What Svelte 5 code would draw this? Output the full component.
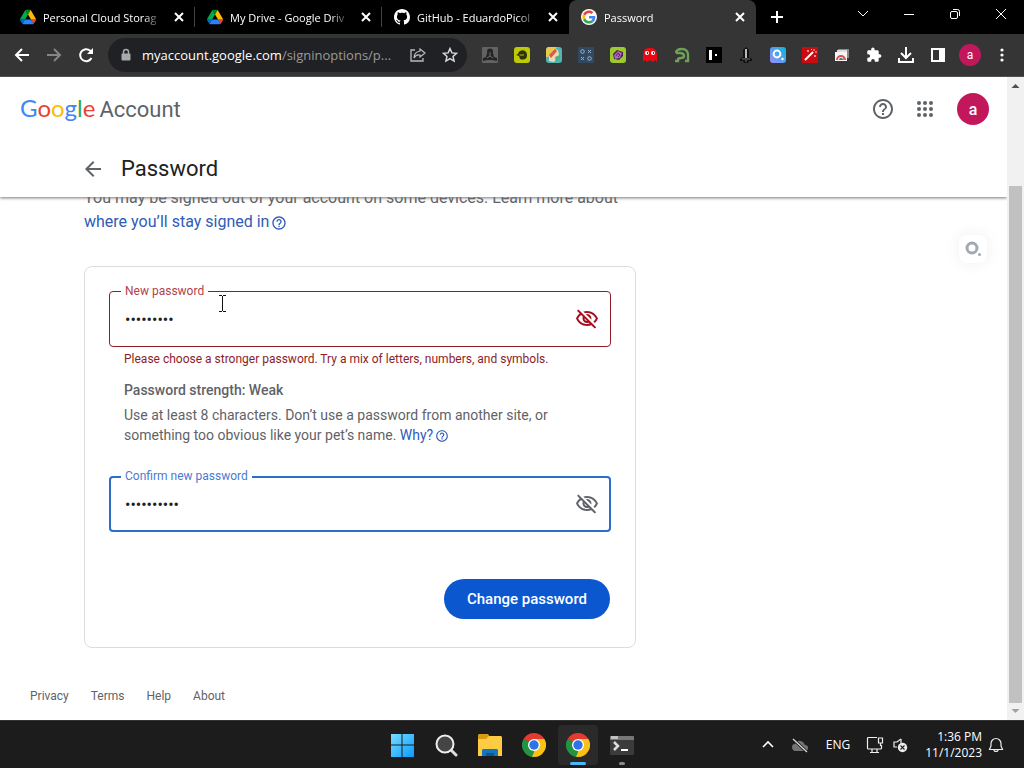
<script lang="ts">
    const tabs = [
        { title: "Personal Cloud Storag", icon: "drive", active: false },
        { title: "My Drive - Google Driv", icon: "drive", active: false },
        { title: "GitHub - EduardoPicol", icon: "github", active: false },
        { title: "Password", icon: "google", active: true },
    ]

    const extensions = [
        "figure",
        "helmet",
        "photo",
        "oxxo",
        "gem",
        "ghost",
        "snake",
        "bar",
        "sword",
        "search",
        "wand",
        "cards",
        "puzzle",
        "download",
        "panel",
    ]

    const footerLinks = ["Privacy", "Terms", "Help", "About"]

    let newPassword = $state("aaaaaaaaa")
    let confirmPassword = $state("aaaaaaaaaa")
</script>

{#snippet help()}
    <svg viewBox="0 0 24 24" fill="currentColor" aria-hidden="true">
        <path
            d="M11 18h2v-2h-2v2zm1-16C6.48 2 2 6.48 2 12s4.48 10 10 10 10-4.48 10-10S17.52 2 12 2zm0 18c-4.41 0-8-3.59-8-8s3.59-8 8-8 8 3.59 8 8-3.59 8-8 8zm0-14c-2.21 0-4 1.79-4 4h2c0-1.1.9-2 2-2s2 .9 2 2c0 2-3 1.75-3 5h2c0-2.25 3-2.5 3-5 0-2.21-1.79-4-4-4z"
        />
    </svg>
{/snippet}

{#snippet eyeOff()}
    <svg viewBox="0 0 24 24" width="24" height="24" fill="currentColor" aria-hidden="true">
        <path
            d="M12 6c3.79 0 7.17 2.13 8.82 5.5-.59 1.22-1.42 2.27-2.41 3.12l1.41 1.41c1.39-1.23 2.49-2.77 3.18-4.53C21.27 7.11 17 4 12 4c-1.27 0-2.49.2-3.64.57l1.65 1.65C10.66 6.09 11.32 6 12 6zm-1.07 1.14L13 9.21c.57.25 1.03.71 1.28 1.28l2.07 2.07c.08-.34.14-.7.14-1.07C16.5 9.01 14.48 7 12 7c-.37 0-.72.05-1.07.14zM2.01 3.87l2.68 2.68C3.06 7.83 1.77 9.53 1 11.5 2.73 15.89 7 19 12 19c1.52 0 2.98-.29 4.32-.82l3.42 3.42 1.41-1.41L3.42 2.45 2.01 3.87zm7.5 7.5l2.61 2.61c-.04.01-.08.02-.12.02-1.38 0-2.5-1.12-2.5-2.5 0-.05.01-.08.01-.13zm-3.4-3.4l1.75 1.75c-.23.55-.36 1.15-.36 1.78 0 2.48 2.02 4.5 4.5 4.5.63 0 1.23-.13 1.77-.36l.98.98c-.88.24-1.8.38-2.75.38-3.79 0-7.17-2.13-8.82-5.5.7-1.43 1.72-2.61 2.93-3.53z"
        />
    </svg>
{/snippet}

{#snippet chromeLogo()}
    <svg viewBox="0 0 24 24" width="24" height="24" aria-hidden="true">
        <path d="M12 12L1.600 6A12 12 0 0 1 22.400 6z" fill="#e33b2e" />
        <path d="M12 12L22.400 6A12 12 0 0 1 12 24z" fill="#fbc116" />
        <path d="M12 12L12 24A12 12 0 0 1 1.600 6z" fill="#229342" />
        <path d="M12 6H22.400L17.200 15L12 24L17.200 15z" fill="#fbc116" />
        <path d="M1.600 6L6.800 15L12 12z" fill="#229342" />
        <path d="M17.200 15L12 24L10 23.800L14 15z" fill="#fbc116" />
        <circle cx="12" cy="12" r="6" fill="#fff" />
        <circle cx="12" cy="12" r="4.700" fill="#2f73e8" />
    </svg>
{/snippet}

{#snippet favicon(name: string)}
    {#if name === "drive"}
        <svg viewBox="0 0 87 78" width="16" height="16" aria-hidden="true">
            <path
                d="m6.600 66.850 3.850 6.650c.8 1.400 1.950 2.500 3.300 3.300l13.750-23.800h-27.500c0 1.550.4 3.100 1.200 4.500z"
                fill="#0066da"
            />
            <path
                d="m43.650 25-13.750-23.800c-1.350.8-2.500 1.900-3.300 3.300l-25.400 44a9.060 9.060 0 0 0-1.200 4.500h27.500z"
                fill="#00ac47"
            />
            <path
                d="m73.550 76.800c1.350-.8 2.500-1.900 3.300-3.300l1.600-2.750 7.650-13.250c.8-1.400 1.200-2.950 1.200-4.500h-27.500l5.850 11.500z"
                fill="#ea4335"
            />
            <path
                d="m43.650 25 13.750-23.800c-1.350-.8-2.900-1.200-4.500-1.200h-18.500c-1.600 0-3.150.45-4.500 1.200z"
                fill="#00832d"
            />
            <path
                d="m59.800 53h-32.300l-13.750 23.800c1.350.8 2.900 1.200 4.500 1.200h50.800c1.600 0 3.150-.45 4.500-1.200z"
                fill="#2684fc"
            />
            <path
                d="m73.400 26.500-12.700-22c-.8-1.400-1.950-2.500-3.300-3.300l-13.750 23.800 16.150 28h27.450c0-1.550-.4-3.100-1.200-4.500z"
                fill="#ffba00"
            />
        </svg>
    {:else if name === "github"}
        <svg viewBox="0 0 16 16" width="16" height="16" fill="#fff" aria-hidden="true">
            <path
                d="M8 0C3.580 0 0 3.580 0 8c0 3.540 2.290 6.530 5.470 7.590.4.070.55-.17.55-.38 0-.19-.01-.82-.01-1.490-2.010.37-2.530-.49-2.690-.94-.09-.23-.48-.94-.82-1.130-.28-.15-.68-.52-.01-.53.63-.01 1.080.58 1.230.82.72 1.210 1.870.87 2.330.66.07-.52.28-.87.51-1.070-1.780-.2-3.640-.89-3.640-3.950 0-.87.31-1.590.82-2.150-.08-.2-.36-1.020.08-2.120 0 0 .67-.21 2.200.82.64-.18 1.320-.27 2-.27s1.360.09 2 .27c1.530-1.040 2.200-.82 2.200-.82.44 1.100.16 1.920.08 2.120.51.56.82 1.270.82 2.150 0 3.070-1.870 3.750-3.650 3.950.29.25.54.73.54 1.480 0 1.070-.01 1.930-.01 2.200 0 .21.15.46.55.38A8.010 8.010 0 0 0 16 8c0-4.420-3.580-8-8-8z"
            />
        </svg>
    {:else}
        <svg viewBox="-5 -5 58 58" width="16" height="16" aria-hidden="true">
            <circle cx="24" cy="24" r="29" fill="#fff" />
            <path
                d="M24 9.500c3.540 0 6.710 1.220 9.210 3.600l6.850-6.850C35.900 2.380 30.470 0 24 0 14.620 0 6.510 5.380 2.560 13.220l7.980 6.190C12.430 13.720 17.740 9.500 24 9.500z"
                fill="#ea4335"
            />
            <path
                d="M46.980 24.550c0-1.570-.15-3.090-.38-4.550H24v9.020h12.940c-.58 2.960-2.260 5.480-4.780 7.180l7.730 6c4.510-4.180 7.090-10.360 7.090-17.650z"
                fill="#4285f4"
            />
            <path
                d="M10.530 28.590A14.500 14.500 0 0 1 9.770 24c0-1.600.27-3.140.76-4.590l-7.980-6.190A23.900 23.900 0 0 0 0 24c0 3.880.92 7.540 2.560 10.780z"
                fill="#fbbc05"
            />
            <path
                d="M24 48c6.480 0 11.930-2.130 15.890-5.810l-7.730-6c-2.150 1.450-4.920 2.300-8.160 2.300-6.260 0-11.570-4.220-13.470-9.910l-7.980 6.190C6.510 42.620 14.620 48 24 48z"
                fill="#34a853"
            />
        </svg>
    {/if}
{/snippet}

{#snippet extensionIcon(name: string)}
    <svg viewBox="0 0 16 16" width="16" height="16" aria-hidden="true">
        {#if name === "figure"}
            <rect width="16" height="16" rx="1" fill="#626262" />
            <circle cx="8" cy="4.500" r="3" fill="#242424" />
            <path d="M5 6h6l1 4 3 1v3l-4-1H5l-4 1v-3l3-1z" fill="#242424" />
            <path d="M5 11l3-2 3 2M8 5v4" stroke="#888" stroke-width=".7" fill="none" />
        {:else if name === "helmet"}
            <rect width="16" height="16" rx="3" fill="#bdca05" />
            <path d="M4 7c1-5 9-5 9 1 0 5-4 5-7 4L5 9 2 8z" fill="#30330c" />
            <path d="M5 7h5v2H6z" fill="#727a08" />
        {:else if name === "photo"}
            <rect width="16" height="16" rx="3" fill="#53b4b4" />
            <path d="M2 0h9L2 10H0V3q0-2 2-3z" fill="#edc64f" />
            <path d="M3 9L9 2l3 1 1 5-5 7-5-1z" fill="#edd9b6" />
            <path d="M3 8l6-6 2 2-6 7z" fill="#db5b3e" />
            <path d="M9 10l5-2v4l-4 3z" fill="#45b38c" />
        {:else if name === "oxxo"}
            <rect width="16" height="16" fill="#304961" />
            <g fill="none" stroke="#9db2c8">
                <circle cx="4.500" cy="4.500" r="1.800" />
                <circle cx="11.500" cy="11.500" r="1.800" />
                <path d="M10 3l3 3m0-3l-3 3M3 10l3 3m0-3l-3 3" />
            </g>
        {:else if name === "gem"}
            <rect width="16" height="16" rx="3" fill="#9ecb2c" />
            <path d="M3 7l4-4 6 2v4l-4 4-5-1z" fill="#462251" />
            <path d="M4 8l4-4 4 2-2 5-5 1z" fill="#ad65bc" />
            <path d="M6 9l2-3 2 2-2 2" fill="none" stroke="#573064" />
        {:else if name === "ghost"}
            <path d="M1 15V8Q1 2 6 1h4q5 1 5 7v7l-2-2-2 2-3-2-3 2-2-2z" fill="#ed0710" />
            <circle cx="5" cy="6" r="2" fill="#fff" />
            <circle cx="11" cy="6" r="2" fill="#fff" />
            <path d="M5 5h1v2H5zm6 0h1v2h-1z" fill="#222bdc" />
        {:else if name === "snake"}
            <path
                d="M2 6q0-4 6-4 6 0 6 6v6h-3M2 6h4q4 0 4 3 0 2-3 2-2 0-3 1v2H1"
                fill="none"
                stroke="#6f9f59"
                stroke-width="2.400"
            />
        {:else if name === "bar"}
            <rect width="16" height="16" fill="#000" />
            <path d="M3 3h3v10H3zm6 4h2v2H9z" fill="#fff" />
        {:else if name === "sword"}
            <path d="M5 3l3-3 3 3v7l3 2v2h-3l-1 2H6l-1-2H2v-2l3-2z" fill="#111" />
            <path d="M8 2v9" stroke="#b8b8b8" stroke-width="2" />
            <path d="M4 12h8M8 13v2" stroke="#79716b" />
        {:else if name === "search"}
            <defs>
                <linearGradient id="search-fill" x1="0" y1="1" x2="1" y2="0">
                    <stop stop-color="#a08cff" />
                    <stop offset="1" stop-color="#05b6dd" />
                </linearGradient>
            </defs>
            <rect width="16" height="16" rx="3" fill="url(#search-fill)" />
            <circle cx="7" cy="7" r="3.400" fill="none" stroke="#fff" stroke-width="2" />
            <circle cx="12.500" cy="12" r="1.200" fill="#fff" />
        {:else if name === "wand"}
            <rect width="16" height="16" fill="#c80c12" />
            <path d="M3 13l8-8" stroke="#fff" stroke-width="2" />
            <path d="M6 3v2m-1-1h2m5-2v2m1 4v2m-1-1h2M9 2l1 1m3 2h2" stroke="#ffb8aa" />
        {:else if name === "cards"}
            <path d="M4 2h11v9h-2v3H1V5h3z" fill="#888" />
            <rect x="3" y="3" width="10" height="8" fill="#dedede" />
            <rect x="1" y="5" width="12" height="9" fill="#f5f5f5" />
            <path d="M3 13a4 4 0 0 1 8 0" fill="none" stroke="#e24b42" stroke-width="2" />
            <path d="M5 13a2 2 0 0 1 4 0z" fill="#3b6eab" />
            <path d="M9 10l2 3H9z" fill="#75a85e" />
        {:else if name === "puzzle"}
            <path
                d="M13.700 7.300h-1V4.700c0-.8-.6-1.400-1.400-1.400H8.600v-1a1.700 1.700 0 0 0-3.400 0v1H2.600c-.8 0-1.300.6-1.300 1.400v2.500h1a1.800 1.800 0 0 1 0 3.600h-1v2.600c0 .7.600 1.300 1.300 1.300h2.600v-1a1.800 1.800 0 0 1 3.600 0v1h2.500c.8 0 1.400-.6 1.400-1.300v-2.700h1a1.700 1.700 0 0 0 0-3.400z"
                fill="#fff"
            />
        {:else if name === "download"}
            <path d="M8 0v10M3 6l5 5 5-5M1 11v4h14v-4" fill="none" stroke="#fff" stroke-width="2" />
        {:else}
            <path d="M1 1h14v14H1zM3 3v10h6V3z" fill="#fff" fill-rule="evenodd" />
        {/if}
    </svg>
{/snippet}

<div class="desktop">
    <div class="tab-strip">
        {#each tabs as tab}
            <div class="tab" class:active={tab.active}>
                {@render favicon(tab.icon)}
                <span class="tab-title">{tab.title}</span>
                <button class="tab-close" aria-label="Close tab">
                    <svg viewBox="0 0 16 16" width="16" height="16" aria-hidden="true">
                        <path d="M4 4l8 8m0-8l-8 8" stroke="#fff" stroke-width="2" />
                    </svg>
                </button>
            </div>
        {/each}
        <button class="new-tab" aria-label="New tab">
            <svg viewBox="0 0 16 16" width="16" height="16" aria-hidden="true">
                <path d="M8 2v12M2 8h12" stroke="#fff" stroke-width="2" />
            </svg>
        </button>
        <div class="window-controls">
            <button aria-label="Search tabs">
                <svg viewBox="0 0 12 12" width="12" height="12"><path d="M1 3l5 5 5-5" /></svg>
            </button>
            <button aria-label="Minimize">
                <svg viewBox="0 0 12 12" width="12" height="12"><path d="M1 6.500h10" /></svg>
            </button>
            <button aria-label="Restore">
                <svg viewBox="0 0 12 12" width="12" height="12">
                    <rect x="1.500" y="3.500" width="7" height="7" rx="1.500" />
                    <path d="M4 1.500h4.500q2 0 2 2V8" />
                </svg>
            </button>
            <button aria-label="Close window">
                <svg viewBox="0 0 12 12" width="12" height="12"><path d="M1 1l10 10M11 1L1 11" /></svg>
            </button>
        </div>
    </div>

    <div class="toolbar">
        <button class="tool" aria-label="Back">
            <svg viewBox="0 0 16 16" width="16" height="16">
                <path d="M15 8H2m6-6L2 8l6 6" fill="none" stroke="#fff" stroke-width="2" />
            </svg>
        </button>
        <button class="tool" aria-label="Forward">
            <svg viewBox="0 0 16 16" width="16" height="16">
                <path d="M1 8h13M8 2l6 6-6 6" fill="none" stroke="#858585" stroke-width="2" />
            </svg>
        </button>
        <button class="tool" aria-label="Reload">
            <svg viewBox="0 0 16 16" width="16" height="16">
                <path d="M13.500 11A6 6 0 1 1 12 3.500l2 2" fill="none" stroke="#fff" stroke-width="2" />
                <path d="M15 1v6H9z" fill="#fff" />
            </svg>
        </button>
        <div class="omnibox">
            <svg class="lock" viewBox="0 0 12 14" width="12" height="14" aria-hidden="true">
                <path d="M3.500 6V4a2.500 2.500 0 0 1 5 0v2" fill="none" stroke="#aaa" stroke-width="1.500" />
                <rect x="1.500" y="5.500" width="9" height="7" rx="1" fill="#aaa" />
            </svg>
            <span class="url">myaccount.google.com<span>/signinoptions/p...</span></span>
            <button class="tool" aria-label="Share this page">
                <svg viewBox="0 0 16 16" width="16" height="16" fill="none" stroke="#bbb">
                    <path d="M5 3H1v11h12v-3" stroke-width="1.300" />
                    <path d="M10 2l5 4-5 4V8Q6 7 4 11q0-6 6-7z" stroke-width="1.200" />
                </svg>
            </button>
            <button class="tool" aria-label="Bookmark this tab">
                <svg viewBox="0 0 16 16" width="16" height="16">
                    <path
                        d="M8 1.500l1.900 4.400 4.700.4-3.600 3.100 1.100 4.700L8 11.600l-4.100 2.500L5 9.400 1.400 6.300l4.700-.4z"
                        fill="none"
                        stroke="#ddd"
                        stroke-width="1.400"
                    />
                </svg>
            </button>
        </div>
        {#each extensions as name}
            <button class="tool" aria-label={name}>{@render extensionIcon(name)}</button>
        {/each}
        <button class="tool" aria-label="Profile"><span class="profile">a</span></button>
        <button class="tool" aria-label="Menu">
            <svg viewBox="0 0 16 16" width="16" height="16" fill="#fff">
                <circle cx="8" cy="3" r="1.600" />
                <circle cx="8" cy="8" r="1.600" />
                <circle cx="8" cy="13" r="1.600" />
            </svg>
        </button>
    </div>

    <div class="viewport">
        <div class="page">
            <header>
                <div class="app-bar">
                    <a class="brand" href="#home">
                        <span class="google" aria-label="Google"
                            ><i class="blue">G</i><i class="red">o</i><i class="yellow">o</i><i class="blue">g</i><i
                                class="green">l</i
                            ><i class="red">e</i></span
                        >
                        <span>Account</span>
                    </a>
                    <button class="round" aria-label="Help">{@render help()}</button>
                    <button class="round" aria-label="Google apps">
                        <svg viewBox="0 0 24 24" fill="currentColor">
                            {#each [6, 12, 18] as cy}
                                {#each [6, 12, 18] as cx}
                                    <circle {cx} {cy} r="2" />
                                {/each}
                            {/each}
                        </svg>
                    </button>
                    <button class="avatar" aria-label="Google Account">a</button>
                </div>
                <div class="title-bar">
                    <a href="#back" aria-label="Back">
                        <svg viewBox="0 0 24 24" width="24" height="24" fill="currentColor">
                            <path d="M20 11H7.830l5.590-5.590L12 4l-8 8 8 8 1.410-1.410L7.830 13H20v-2z" />
                        </svg>
                    </a>
                    <h1>Password</h1>
                </div>
            </header>

            <main>
                <p class="intro">
                    You may be signed out of your account on some devices. Learn more about
                    <a href="#devices">where you’ll stay signed in{@render help()}</a>
                </p>

                <form class="card" onsubmit={e => e.preventDefault()}>
                    <div class="field error">
                        <label for="new-password">New password</label>
                        <input id="new-password" type="password" bind:value={newPassword} />
                        <button type="button" aria-label="Show password">{@render eyeOff()}</button>
                        <svg class="caret" viewBox="0 0 9 17" width="9" height="17" aria-hidden="true">
                            <path d="M1 .5h3m1 0h3M4.500 1v15M1 16.500h3m1 0h3" fill="none" stroke="#111" />
                        </svg>
                    </div>
                    <p class="error-text">
                        Please choose a stronger password. Try a mix of letters, numbers, and symbols.
                    </p>
                    <div class="strength">
                        <strong>Password strength: Weak</strong>
                        <p>
                            Use at least 8 characters. Don’t use a password from another site, or
                            something too obvious like your pet’s name.
                            <a href="#why">Why?{@render help()}</a>
                        </p>
                    </div>
                    <div class="field focused">
                        <label for="confirm-password">Confirm new password</label>
                        <input id="confirm-password" type="password" bind:value={confirmPassword} />
                        <button type="button" aria-label="Show password">{@render eyeOff()}</button>
                    </div>
                    <button class="submit" type="submit">Change password</button>
                </form>
            </main>

            <footer>
                {#each footerLinks as link}
                    <a href="#{link.toLowerCase()}">{link}</a>
                {/each}
            </footer>

            <button class="lookup" aria-label="Look up">
                <svg viewBox="0 0 18 18" width="18" height="18">
                    <circle cx="8" cy="8" r="5" fill="none" stroke="#a2a9b0" stroke-width="3" />
                    <circle cx="15.500" cy="14.500" r="1.500" fill="#a2a9b0" />
                </svg>
            </button>
        </div>

        <div class="scrollbar" aria-hidden="true">
            <svg viewBox="0 0 17 17" width="17" height="17"><path d="M4.500 11l4-4 4 4z" fill="#505050" /></svg>
            <div class="thumb"></div>
            <svg viewBox="0 0 17 17" width="17" height="17"><path d="M4.500 6l4 4 4-4z" fill="#a0a0a0" /></svg>
        </div>
    </div>

    <div class="taskbar">
        <div class="apps">
            <button aria-label="Start">
                <svg viewBox="0 0 24 24" width="24" height="24">
                    <defs>
                        <linearGradient id="start-fill" x1="0" y1="0" x2="24" y2="24" gradientUnits="userSpaceOnUse">
                            <stop stop-color="#7be0ff" />
                            <stop offset="1" stop-color="#0a9aff" />
                        </linearGradient>
                    </defs>
                    <path d="M1 1h10.500v10.500H1zm11.500 0H24v10.500H12.500zM1 12.500h10.500V24H1zm11.500 0H24V24H12.500z" fill="url(#start-fill)" />
                </svg>
            </button>
            <button aria-label="Search">
                <svg viewBox="0 0 24 24" width="24" height="24">
                    <path d="M17 17l5 5" stroke="#ddd" stroke-width="3" stroke-linecap="round" />
                    <circle cx="11" cy="11" r="8.500" fill="#454545" stroke="#eee" stroke-width="2" />
                </svg>
            </button>
            <button aria-label="File Explorer">
                <svg viewBox="0 0 24 24" width="24" height="24">
                    <path d="M1 1h9l2 3v5H0V2z" fill="#d79a11" />
                    <path d="M0 6h8l3-3h12l1 1v19H0z" fill="#fdcc42" />
                    <path d="M4 23v-6l1-1h14l1 1v6z" fill="#1676bb" />
                    <path d="M8 23v-3h8v3z" fill="#0b559a" />
                </svg>
            </button>
            <button aria-label="Google Chrome">{@render chromeLogo()}</button>
            <button class="running current" aria-label="Google Chrome, current window">
                {@render chromeLogo()}
            </button>
            <button class="running" aria-label="Terminal">
                <svg viewBox="0 0 24 24" width="24" height="24">
                    <rect y="3" width="24" height="19" rx="1" fill="#3b3b3b" />
                    <path d="M0 7V4q0-1 1-1h22q1 0 1 1v3z" fill="#777" />
                    <path d="M1 3h7v3H1z" fill="#c0c0c0" />
                    <path d="M4 9l4 4-4 4" fill="none" stroke="#ddd" stroke-width="2.500" />
                    <path d="M11 17h7" stroke="#fff" stroke-width="2" />
                </svg>
            </button>
        </div>
        <div class="tray">
            <button aria-label="Show hidden icons">
                <svg viewBox="0 0 16 16" width="16" height="16">
                    <path d="M3 10l5-5 5 5" fill="none" stroke="#fff" stroke-width="1.600" />
                </svg>
            </button>
            <button aria-label="OneDrive">
                <svg viewBox="0 0 16 16" width="16" height="16">
                    <path d="M3 14q-3-1-3-4t3-3q2-4 6-3 3 1 4 4 3 0 3 3t-3 3z" fill="#747474" />
                    <path d="M1 2l14 13" stroke="#1c1c1c" stroke-width="3" />
                    <path d="M1 2l14 13" stroke="#ddd" stroke-width="1.200" />
                </svg>
            </button>
            <button class="language">ENG</button>
            <button class="status" aria-label="Network and volume">
                <svg viewBox="0 0 18 18" width="18" height="18" fill="none" stroke="#eee" stroke-width="1.200">
                    <path d="M11 1.500H2.500q-1 0-1 1V12q0 1 1 1h12q1 0 1-1V9M6 13v3m5-3v3m-7 .5h9M12.500 2h4v5h-4zM14.500 7v3" />
                </svg>
                <svg viewBox="0 0 16 16" width="16" height="16">
                    <path d="M9 2L5 5H2v5h3" fill="none" stroke="#eee" stroke-width="1.200" />
                    <path d="M9 2v4" stroke="#eee" stroke-width="1.200" />
                    <circle cx="10.500" cy="10.500" r="4.700" fill="#eee" />
                    <path d="M8.500 8.500l4 4m0-4l-4 4" stroke="#222" stroke-width="1.100" />
                </svg>
            </button>
            <div class="clock"><span>1:36 PM</span><span>11/1/2023</span></div>
            <button class="bell" aria-label="Notifications">
                <svg viewBox="0 0 16 16" width="16" height="16" fill="none" stroke="#eee" stroke-width="1.200">
                    <path d="M3 9V6.500a5 5 0 0 1 10 0V9l1.500 3.500h-13zM6 12.500a2 2 0 0 0 4 0" />
                </svg>
            </button>
        </div>
    </div>
</div>

<style>
    :global(body) {
        margin: 0;
    }

    .desktop {
        display: flex;
        flex-direction: column;
        min-height: 100vh;
        background: #fff;
        font-family: Roboto, sans-serif;
    }

    .desktop *,
    .desktop {
        box-sizing: border-box;
    }

    button {
        display: flex;
        align-items: center;
        justify-content: center;
        flex-shrink: 0;
        padding: 0;
        border: 0;
        background: none;
        color: inherit;
        font: inherit;
    }

    svg {
        display: block;
        flex-shrink: 0;
    }

    p {
        margin: 0;
    }

    a {
        color: #2f5bb7;
        text-decoration: none;
    }

    /* Browser frame */
    .tab-strip {
        display: flex;
        height: 34px;
        padding-left: 8px;
        background: #000;
        color: #fff;
        font: 11px "Open Sans", sans-serif;
    }

    .tab {
        display: flex;
        flex: 0 1 187px;
        align-items: center;
        min-width: 0;
        padding: 0 7px 0 12px;
        border-right: 1px solid transparent;
        border-radius: 8px 8px 0 0;
    }

    .tab:not(.active) {
        border-radius: 0;
        border-image: linear-gradient(#000 8px, #444 8px, #444 26px, #000 26px) 1;
        border-style: solid;
        border-width: 0 1px 0 0;
    }

    .tab:nth-child(3) {
        border-image: none;
        border-color: transparent;
    }

    .tab.active {
        background: #353535;
    }

    .tab-title {
        flex: 1;
        min-width: 0;
        margin: 0 8px 0 7px;
        overflow: hidden;
        white-space: nowrap;
        mask-image: linear-gradient(to left, transparent, #000 20px);
    }

    .new-tab {
        width: 42px;
    }

    .window-controls {
        display: flex;
        margin-left: auto;
    }

    .window-controls button {
        width: 46px;
        height: 28px;
    }

    .window-controls svg {
        fill: none;
        stroke: #fff;
    }

    .toolbar {
        display: flex;
        align-items: center;
        height: 43px;
        padding: 0 6px;
        border-bottom: 1px solid #505050;
        background: #353535;
    }

    .tool {
        width: 32px;
        height: 32px;
    }

    .omnibox {
        display: flex;
        flex: 1;
        align-items: center;
        min-width: 0;
        height: 34px;
        margin: 0 7px 0 6px;
        padding: 0 1px 0 12px;
        border-radius: 17px;
        background: #202124;
        color: #fff;
        font: 13px "Open Sans", sans-serif;
    }

    .lock {
        margin-right: 10px;
    }

    .url {
        flex: 1;
        min-width: 0;
        overflow: hidden;
        white-space: nowrap;
    }

    .url span {
        color: #9a9a9a;
    }

    .profile {
        width: 22px;
        border-radius: 50%;
        background: #c2185b;
        color: #fff;
        font-size: 12px;
        line-height: 22px;
    }

    /* Web page */
    .viewport {
        display: flex;
        flex: 1;
    }

    .page {
        position: relative;
        display: flex;
        flex: 1;
        flex-direction: column;
        min-width: 0;
    }

    header {
        z-index: 1;
        background: #fff;
        box-shadow: 0 1px 3px #777;
        clip-path: inset(0 0 -8px 0);
        color: #5f6368;
    }

    .app-bar {
        display: flex;
        align-items: center;
        height: 64px;
        padding: 0 18px 0 20px;
    }

    .brand {
        display: flex;
        align-items: baseline;
        gap: 4px;
        margin-right: auto;
        padding-bottom: 4px;
        color: #5f6368;
        font-size: 22px;
    }

    .google {
        font-family: Lato, sans-serif;
        font-size: 24px;
    }

    .google i {
        font-style: normal;
    }

    .blue {
        color: #4285f4;
    }

    .red {
        color: #ea4335;
    }

    .yellow {
        color: #fbbc05;
    }

    .green {
        color: #34a853;
    }

    .round {
        width: 42px;
        height: 40px;
    }

    .round svg {
        width: 24px;
        height: 24px;
    }

    .avatar {
        width: 32px;
        height: 32px;
        margin-left: 11px;
        border-radius: 50%;
        background: #c2185b;
        color: #fff;
        font-size: 16px;
        font-weight: 500;
    }

    .title-bar {
        display: flex;
        align-items: center;
        gap: 16px;
        height: 56px;
        padding-left: 81px;
    }

    .title-bar a {
        color: #5f6368;
    }

    h1 {
        margin: 0;
        color: #202124;
        font-size: 22px;
        font-weight: 400;
        line-height: 28px;
    }

    /* The first line of the intro is scrolled under the header */
    main {
        width: 100%;
        max-width: 720px;
        margin-top: -11px;
        padding: 0 84px;
    }

    .intro {
        color: #5f6368;
        font-size: 16px;
        line-height: 24px;
    }

    .intro a svg,
    .strength a svg {
        display: inline-block;
        width: 16px;
        height: 16px;
        margin-left: 2px;
        vertical-align: text-bottom;
    }

    .card {
        margin-top: 32px;
        padding: 24px 24px 28px;
        border: 1px solid #dadce0;
        border-radius: 8px;
    }

    .field {
        position: relative;
        display: flex;
        align-items: center;
        height: 56px;
        border: 1px solid #8c1d2b;
        border-radius: 4px;
    }

    .field label {
        position: absolute;
        top: -9px;
        left: 11px;
        padding: 0 4px;
        background: #fff;
        color: #b3424c;
        font-size: 12px;
        line-height: 16px;
    }

    .field input {
        flex: 1;
        min-width: 0;
        height: 100%;
        padding: 0 15px;
        border: 0;
        outline: 0;
        background: none;
        color: #202124;
        font: 16px Roboto, sans-serif;
    }

    .field button {
        width: 46px;
        height: 48px;
        color: #5f6368;
    }

    .field.error button {
        color: #a50e1e;
    }

    .field.focused {
        border: 2px solid #2a6fc9;
    }

    .field.focused label {
        top: -10px;
        left: 10px;
        color: #4a7bd0;
    }

    .field.focused input {
        padding: 0 14px;
    }

    .field.focused button {
        width: 44px;
    }

    .caret {
        position: absolute;
        top: 3px;
        left: 108px;
    }

    .error-text {
        padding: 4px 15px 0;
        color: #8c1d2b;
        font-size: 12px;
        line-height: 16px;
    }

    .strength {
        padding: 13px 15px 31px;
        color: #5f6368;
        font-size: 14px;
        line-height: 20px;
    }

    .strength strong {
        display: block;
        margin-bottom: 5px;
        font-weight: 500;
    }

    .strength a svg {
        width: 14px;
        height: 14px;
    }

    .submit {
        height: 40px;
        margin: 47px 1px 0 auto;
        padding: 0 23px;
        border-radius: 20px;
        background: #0b57d0;
        color: #fff;
        font-size: 15px;
        font-weight: 500;
    }

    footer {
        display: flex;
        gap: 22px;
        margin-top: auto;
        padding: 32px 30px 16px;
        font-size: 12px;
        line-height: 16px;
    }

    footer a {
        color: #5f6368;
    }

    .lookup {
        position: absolute;
        top: 158px;
        right: 20px;
        width: 28px;
        height: 28px;
        border-radius: 8px;
        background: #fff;
        box-shadow: 0 0 16px #eee;
    }

    .scrollbar {
        display: flex;
        flex-direction: column;
        width: 17px;
        background: #f1f1f1;
    }

    .thumb {
        flex: 1;
        margin: 92px 2px 0;
        background: #c1c1c1;
    }

    /* Windows taskbar */
    .taskbar {
        display: grid;
        grid-template-columns: 1fr auto 1fr;
        height: 48px;
        border-top: 1px solid #333;
        background: #1c1c1c;
        color: #fff;
        font: 12px "Open Sans", sans-serif;
    }

    .apps {
        display: flex;
        grid-column: 2;
        align-items: center;
        gap: 4px;
    }

    .apps button {
        position: relative;
        width: 40px;
        height: 40px;
        border-radius: 4px;
    }

    .apps .current {
        background: #2a2a2a;
    }

    .running::after {
        content: "";
        position: absolute;
        bottom: 0;
        width: 6px;
        height: 3px;
        border-radius: 2px;
        background: #8a8a8a;
    }

    .running.current::after {
        width: 16px;
        background: #4cb5f5;
    }

    .tray {
        display: flex;
        align-items: center;
        justify-content: flex-end;
        padding-right: 14px;
    }

    .tray button {
        width: 32px;
        height: 40px;
    }

    .tray .language {
        width: 44px;
    }

    .tray .status {
        gap: 8px;
        width: 54px;
    }

    .clock {
        display: flex;
        flex-direction: column;
        width: 68px;
        text-align: right;
        line-height: 16px;
    }

    .tray .bell {
        width: 28px;
    }
</style>
